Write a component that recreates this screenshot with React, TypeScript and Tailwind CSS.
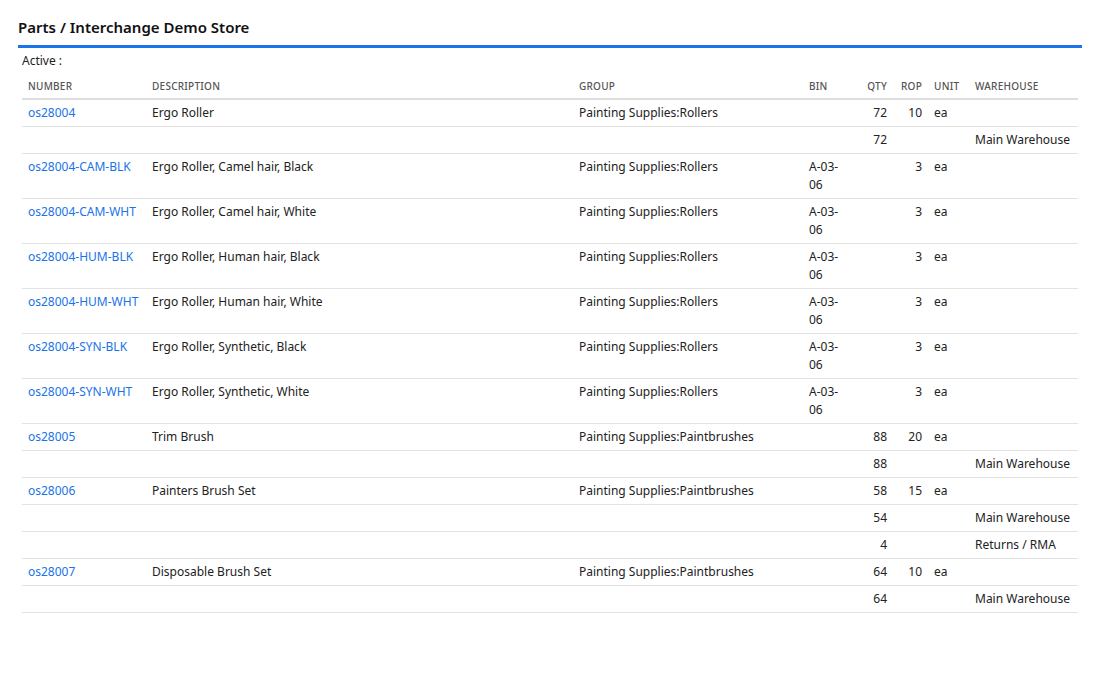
const rows: [string, string, string, string, string, string, string, string][] = [
  ["os28004", "Ergo Roller", "Painting Supplies:Rollers", "", "72", "10", "ea", ""],
  ["", "", "", "", "72", "", "", "Main Warehouse"],
  ["os28004-CAM-BLK", "Ergo Roller, Camel hair, Black", "Painting Supplies:Rollers", "A-03-06", "", "3", "ea", ""],
  ["os28004-CAM-WHT", "Ergo Roller, Camel hair, White", "Painting Supplies:Rollers", "A-03-06", "", "3", "ea", ""],
  ["os28004-HUM-BLK", "Ergo Roller, Human hair, Black", "Painting Supplies:Rollers", "A-03-06", "", "3", "ea", ""],
  ["os28004-HUM-WHT", "Ergo Roller, Human hair, White", "Painting Supplies:Rollers", "A-03-06", "", "3", "ea", ""],
  ["os28004-SYN-BLK", "Ergo Roller, Synthetic, Black", "Painting Supplies:Rollers", "A-03-06", "", "3", "ea", ""],
  ["os28004-SYN-WHT", "Ergo Roller, Synthetic, White", "Painting Supplies:Rollers", "A-03-06", "", "3", "ea", ""],
  ["os28005", "Trim Brush", "Painting Supplies:Paintbrushes", "", "88", "20", "ea", ""],
  ["", "", "", "", "88", "", "", "Main Warehouse"],
  ["os28006", "Painters Brush Set", "Painting Supplies:Paintbrushes", "", "58", "15", "ea", ""],
  ["", "", "", "", "54", "", "", "Main Warehouse"],
  ["", "", "", "", "4", "", "", "Returns / RMA"],
  ["os28007", "Disposable Brush Set", "Painting Supplies:Paintbrushes", "", "64", "10", "ea", ""],
  ["", "", "", "", "64", "", "", "Main Warehouse"],
];

export default function App() {
  return (
    <div className="min-h-screen bg-white px-[18px] pt-[17px] text-[12px] leading-[18px] text-[#222]" style={{ fontFamily: '"Noto Sans", "Open Sans", sans-serif' }}>
      <h1 className="pb-[8px] text-[15px] font-semibold leading-[20px] text-[#111]">Parts / Interchange Demo Store</h1>
      <div className="h-[3px] bg-[#1a73e8]" />
      <div className="px-1">
        <div className="pt-[4px] pb-[7px]">Active :</div>
        <table className="w-full table-fixed border-collapse">
          <colgroup>
            <col className="w-[124px]" />
            <col className="w-[427px]" />
            <col className="w-[230px]" />
            <col className="w-[42px]" />
            <col className="w-[48px]" />
            <col className="w-[35px]" />
            <col className="w-[41px]" />
            <col />
          </colgroup>
          <thead>
            <tr className="border-b-2 border-[#ddd] text-[10px] tracking-wide text-[#555]">
              <th className="px-[6px] pb-[3px] text-left font-medium">NUMBER</th>
              <th className="px-[6px] pb-[3px] text-left font-medium">DESCRIPTION</th>
              <th className="px-[6px] pb-[3px] text-left font-medium">GROUP</th>
              <th className="px-[6px] pb-[3px] text-left font-medium">BIN</th>
              <th className="px-[6px] pb-[3px] text-right font-medium">QTY</th>
              <th className="px-[6px] pb-[3px] text-right font-medium">ROP</th>
              <th className="px-[6px] pb-[3px] text-left font-medium">UNIT</th>
              <th className="px-[6px] pb-[3px] text-left font-medium">WAREHOUSE</th>
            </tr>
          </thead>
          <tbody>
            {rows.map((r, i) => (
              <tr key={i} className="border-b border-[#e3e3e3] align-top">
                <td className="px-[6px] py-[4px] text-[#1a73e8]">{r[0]}</td>
                <td className="px-[6px] py-[4px]">{r[1]}</td>
                <td className="px-[6px] py-[4px]">{r[2]}</td>
                <td className="px-[6px] py-[4px]">{r[3]}</td>
                <td className="px-[6px] py-[4px] text-right">{r[4]}</td>
                <td className="px-[6px] py-[4px] text-right">{r[5]}</td>
                <td className="px-[6px] py-[4px]">{r[6]}</td>
                <td className="px-[6px] py-[4px]">{r[7]}</td>
              </tr>
            ))}
          </tbody>
        </table>
      </div>
    </div>
  );
}
